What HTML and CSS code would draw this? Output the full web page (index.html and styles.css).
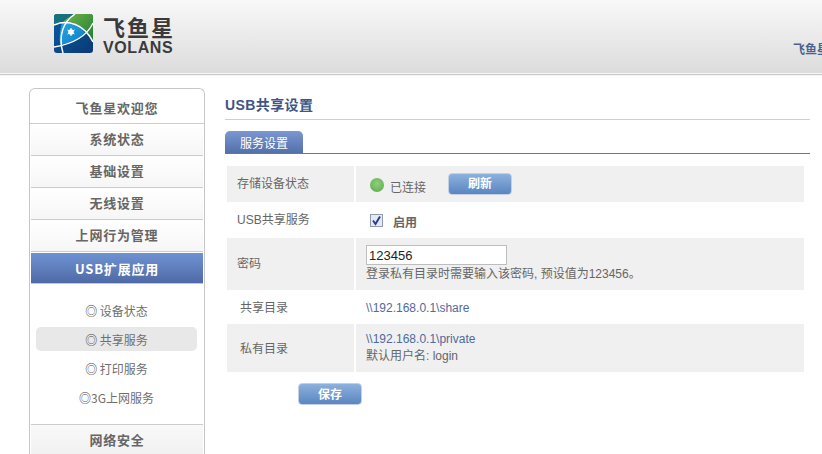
FILE: index.html
```html
<!DOCTYPE html>
<html lang="zh">
<head>
<meta charset="utf-8">
<title>USB共享设置</title>
<link rel="stylesheet" href="styles.css">
</head>
<body>
<header class="top">
  <div class="brand">
    <svg class="mark" width="39" height="39" viewBox="0 0 39 39">
      <defs>
        <clipPath id="sq"><rect width="39" height="39" rx="3"/></clipPath>
        <linearGradient id="gr" x1="0" y1="0" x2="1" y2="1"><stop offset="0" stop-color="#74b646"/><stop offset="1" stop-color="#1c7a38"/></linearGradient>
        <linearGradient id="bl" x1="0" y1="0" x2="1" y2="1"><stop offset="0" stop-color="#0c5aa4"/><stop offset="1" stop-color="#0a3a74"/></linearGradient>
        <linearGradient id="ey" x1="0" y1="0" x2="1" y2="1"><stop offset="0" stop-color="#27a7e0"/><stop offset="1" stop-color="#0f7cc4"/></linearGradient>
      </defs>
      <g clip-path="url(#sq)">
        <rect width="39" height="39" fill="url(#bl)"/>
        <path d="M21 0H39V28C30 10 14 5 8 9C11 5 16 2 21 0Z" fill="url(#gr)"/>
        <path d="M0 0H21C14 3 10 6 7 9L0 11Z" fill="#17717c"/>
        <path d="M8 9C17 7 25 11 31 19C27 24 18 29 6 30.500C5 23 6 15 8 9Z" fill="url(#ey)"/>
        <path d="M0 11C14 5 30 10 39 28" fill="none" stroke="#fff" stroke-width="1.500"/>
        <path d="M21 0C9 8 4 22 9 39" fill="none" stroke="#fff" stroke-width="1.500"/>
        <path d="M39 9C34 20 24 29 0 33" fill="none" stroke="#fff" stroke-width="1.300"/>
        <circle cx="17" cy="18" r="2.800" fill="#fff"/>
        <path d="M17 14V22M13.500 16L20.500 20M20.500 16L13.500 20" stroke="#fff" stroke-width="1"/>
      </g>
    </svg>
    <div class="wordmark">
      <span class="word-cn">飞鱼星</span>
      <span class="word-en">VOLANS</span>
    </div>
  </div>
  <div class="welcome">飞鱼星无线路由器</div>
</header>

<div class="layout">
  <nav class="side">
    <a class="nav-item nav-first">飞鱼星欢迎您</a>
    <a class="nav-item">系统状态</a>
    <a class="nav-item">基础设置</a>
    <a class="nav-item">无线设置</a>
    <a class="nav-item">上网行为管理</a>
    <a class="nav-item nav-active">USB扩展应用</a>
    <div class="sub">
      <a class="sub-item"><span><i class="ring">◎</i> 设备状态</span></a>
      <a class="sub-item sub-current"><span><i class="ring">◎</i> 共享服务</span></a>
      <a class="sub-item"><span><i class="ring">◎</i> 打印服务</span></a>
      <a class="sub-item"><span><i class="ring">◎</i>3G上网服务</span></a>
    </div>
    <a class="nav-item nav-last">网络安全</a>
  </nav>

  <main class="main">
    <h1 class="title">USB共享设置</h1>
    <div class="tabs"><span class="tab">服务设置</span></div>
    <div class="form">
      <div class="row row-a alt">
        <div class="label">存储设备状态</div>
        <div class="value status">
          <span class="dot"></span><span class="connected">已连接</span>
          <button class="btn btn-refresh" type="button">刷新</button>
        </div>
      </div>
      <div class="row row-b">
        <div class="label">USB共享服务</div>
        <div class="value">
          <label class="check"><span class="box"><svg width="13" height="13" viewBox="0 0 13 13"><path d="M3 6.500L5.500 10L10 2.500" fill="none" stroke="#2a3f8f" stroke-width="2"/></svg></span><b>启用</b></label>
        </div>
      </div>
      <div class="row row-c alt">
        <div class="label">密码</div>
        <div class="value stack">
          <input class="pw" type="text" value="123456">
          <span class="hint">登录私有目录时需要输入该密码, 预设值为123456。</span>
        </div>
      </div>
      <div class="row row-d">
        <div class="label label-in">共享目录</div>
        <div class="value"><a class="link link-solo">\\192.168.0.1\share</a></div>
      </div>
      <div class="row row-e alt">
        <div class="label label-in">私有目录</div>
        <div class="value stack">
          <a class="link">\\192.168.0.1\private</a>
          <span class="hint hint-low">默认用户名: login</span>
        </div>
      </div>
    </div>
    <div class="actions"><button class="btn btn-save" type="button">保存</button></div>
  </main>
</div>
</body>
</html>
```

FILE: styles.css
```css
html, body {
  margin: 0;
  padding: 0;
  height: 454px;
  overflow: hidden;
  background: #fff;
}
body {
  font-family: "Liberation Sans", "Noto Sans CJK SC", sans-serif;
  font-size: 12px;
  color: #666;
}
.top {
  height: 73px;
  box-sizing: content-box;
  display: flex;
  align-items: flex-start;
  padding-left: 54px;
  background: linear-gradient(#f8f8f8, #dcdcdc);
  border-bottom: 1px solid #f6f6f6;
  box-shadow: 0 1px 1px #c8c8c8;
  overflow: hidden;
}
.brand {
  flex: 0 0 739px;
  display: flex;
  gap: 10px;
  padding-top: 14px;
}
.mark { display: block; }
.wordmark {
  display: flex;
  flex-direction: column;
  color: #3a3a3c;
  line-height: 1;
}
.word-cn {
  font-family: "Noto Sans CJK SC", sans-serif;
  font-size: 22px;
  font-weight: 700;
  letter-spacing: 2px;
  height: 24px;
  line-height: 24px;
}
.word-en {
  font-family: "Liberation Sans", sans-serif;
  font-size: 16px;
  font-weight: 700;
  letter-spacing: 0.600px;
  margin-top: 2px;
}
.welcome {
  flex: 0 0 auto;
  white-space: nowrap;
  margin-top: 40px;
  font-size: 12px;
  font-weight: 700;
  color: #4a6290;
}
.layout {
  display: flex;
  align-items: flex-start;
  padding: 14px 12px 0 29px;
}
.side {
  flex: 0 0 176px;
  box-sizing: border-box;
  border: 1px solid #c6c6c6;
  border-bottom: 0;
  border-radius: 6px 6px 0 0;
  height: 380px;
  padding: 0;
  display: flex;
  flex-direction: column;
}
.nav-item {
  flex: 0 0 auto;
  height: 32px;
  box-sizing: border-box;
  display: flex;
  align-items: center;
  justify-content: center;
  margin: 0 1px;
  padding-bottom: 2px;
  border-bottom: 1px solid #cccccc;
  font-family: "Noto Sans CJK SC", sans-serif;
  font-size: 13px;
  font-weight: 700;
  color: #666;
  letter-spacing: 0.800px;
  background: linear-gradient(#ffffff, #f6f6f6);
}
.nav-first {
  height: 35px;
  margin: 0;
  padding-top: 4px;
  background: #fff;
  border-radius: 6px 6px 0 0;
}
.nav-active {
  height: 31px;
  margin-top: 1px;
  padding-top: 2px;
  color: #fff;
  border-bottom: 1px solid #b9cbe6;
  background: linear-gradient(#7092d2, #4e6aa6);
}
.nav-last {
  height: 31px;
  padding-top: 1px;
  border-top: 1px solid #cccccc;
  border-bottom: 0;
  background: linear-gradient(#f9f9f9, #f1f1f1);
}
.sub {
  display: flex;
  flex-direction: column;
  gap: 5px;
  padding: 14px 7px 15px 6px;
  background: #fff;
}
.sub-item {
  height: 24px;
  display: flex;
  align-items: center;
  justify-content: center;
  border-radius: 5px;
  font-family: "Noto Sans CJK SC", sans-serif;
  color: #6f6f6f;
}
.ring { font-style: normal; color: #444; }
.sub-current { background: #e9e8e8; }
.main {
  flex: 1;
  margin-left: 20px;
  min-width: 0;
}
.title {
  margin: 0;
  height: 32px;
  box-sizing: border-box;
  padding-top: 8px;
  border-bottom: 1px solid #cfcfcf;
  font-family: "Liberation Sans", "Noto Sans CJK SC", sans-serif;
  font-size: 14px;
  line-height: 18px;
  font-weight: 700;
  letter-spacing: 0.400px;
  color: #3f5585;
}
.tabs {
  margin-top: 10px;
  height: 23px;
  border-bottom: 1px solid #5f7a9e;
  display: flex;
  align-items: flex-end;
}
.tab {
  width: 78px;
  height: 22px;
  display: flex;
  align-items: center;
  justify-content: center;
  border-radius: 5px 5px 0 0;
  background: linear-gradient(#7a97d2, #5470aa);
  color: #fff;
  font-family: "Noto Sans CJK SC", sans-serif;
}
.form {
  margin: 12px 6px 0 2px;
}
.row {
  display: grid;
  grid-template-columns: 127px 1fr;
  column-gap: 2px;
}
.alt .label, .alt .value { background: #f0f0f0; }
.row-a { height: 36px; }
.row-b { height: 36px; }
.row-c { height: 52px; }
.row-d { height: 34px; }
.row-e { height: 48px; }
.label {
  display: flex;
  align-items: center;
  padding: 0 0 3px 10px;
  color: #666;
}
.label-in { padding-left: 13px; padding-bottom: 2px; }
.value {
  display: flex;
  align-items: center;
  padding-left: 10px;
}
.stack {
  flex-direction: column;
  align-items: flex-start;
  justify-content: center;
}
.status { padding-left: 14px; }
.dot {
  width: 14px;
  height: 14px;
  margin-top: 1px;
  border-radius: 50%;
  background: radial-gradient(circle at 50% 40%, #8ed07a, #58a94a);
}
.connected {
  margin-left: 6px;
  margin-top: 5px;
}
.btn {
  border: 1px solid #c2d0e6;
  border-radius: 4px;
  background: linear-gradient(#8db1df, #5b85bf);
  color: #fff;
  font-family: "Noto Sans CJK SC", sans-serif;
  font-size: 12px;
  font-weight: 700;
  padding: 0 0 2px;
}
.btn-refresh {
  width: 64px;
  height: 22px;
  margin-left: 22px;
  line-height: 16px;
}
.check {
  display: flex;
  align-items: center;
  gap: 10px;
  margin-left: 4px;
}
.box {
  width: 13px;
  height: 13px;
  margin-top: 1px;
  border: 1px solid #8f9bb0;
  background: #e6e9f2;
  display: block;
  box-sizing: border-box;
  overflow: hidden;
}
.box svg { display: block; margin: -1px; }
.check b { color: #666; margin-top: 2px; }
.pw {
  width: 141px;
  height: 20px;
  box-sizing: border-box;
  border: 1px solid #bdbdbd;
  padding: 0 2px;
  margin: 0;
  font-family: "Liberation Sans", sans-serif;
  font-size: 13px;
  color: #222;
  background: #fff;
}
.hint { line-height: 17px; color: #666; margin-top: 1px; }
.hint-low { margin-top: 1px; }
.link { color: #51699c; line-height: 16px; }
.link-solo { margin-top: 1px; }
.actions { margin: 11px 0 0 73px; }
.btn-save {
  width: 64px;
  height: 22px;
  display: block;
}
```
